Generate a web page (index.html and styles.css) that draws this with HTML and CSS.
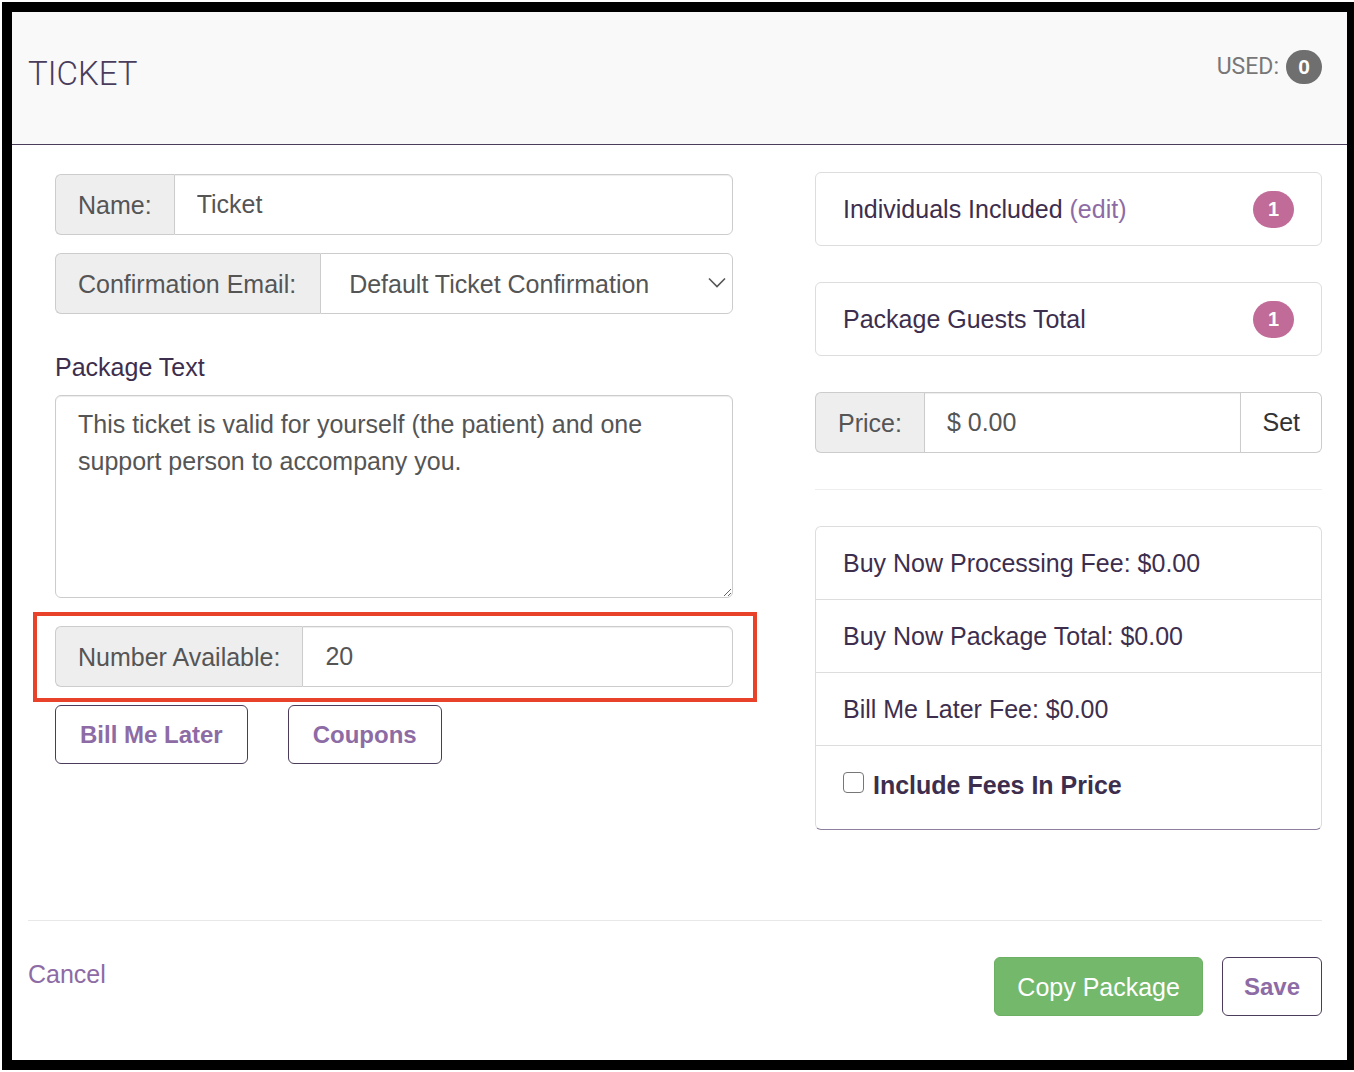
FILE: index.html
```html
<!DOCTYPE html>
<html lang="en">
<head>
<meta charset="utf-8">
<title>Ticket</title>
<link rel="stylesheet" href="styles.css">
</head>
<body>
<div class="frame">
  <div class="modal">
    <header class="modal-header">
      <h1 class="modal-title">TICKET</h1>
      <div class="used">USED: <span class="badge badge-gray">0</span></div>
    </header>

    <div class="modal-body">
      <div class="col col-left">
        <div class="input-group">
          <span class="addon">Name:</span>
          <input class="form-control" type="text" value="Ticket">
        </div>

        <div class="input-group gap-18">
          <span class="addon addon-wide">Confirmation Email:</span>
          <div class="select-wrap">
            <select class="form-control select">
              <option>Default Ticket Confirmation</option>
            </select>
            <svg class="chevron" width="18" height="11" viewBox="0 0 18 11" aria-hidden="true">
              <polyline points="1,1.5 9,9.5 17,1.5" fill="none" stroke="#555" stroke-width="1.6"/>
            </svg>
          </div>
        </div>

        <label class="field-label">Package Text</label>
        <textarea class="form-control textarea">This ticket is valid for yourself (the patient) and one support person to accompany you.</textarea>

        <div class="highlight">
          <div class="input-group">
            <span class="addon">Number Available:</span>
            <input class="form-control" type="text" value="20">
          </div>
        </div>

        <div class="btn-row">
          <button class="btn btn-outline btn-wide">Bill Me Later</button>
          <button class="btn btn-outline btn-wide">Coupons</button>
        </div>
      </div>

      <div class="col col-right">
        <div class="panel">
          <span>Individuals Included <a class="link">(edit)</a></span>
          <span class="badge badge-pink">1</span>
        </div>
        <div class="panel gap-36">
          <span>Package Guests Total</span>
          <span class="badge badge-pink">1</span>
        </div>

        <div class="input-group gap-36">
          <span class="addon">Price:</span>
          <input class="form-control square" type="text" value="$ 0.00">
          <button class="btn-set">Set</button>
        </div>

        <hr class="divider">

        <ul class="list-group">
          <li class="list-item">Buy Now Processing Fee: $0.00</li>
          <li class="list-item">Buy Now Package Total: $0.00</li>
          <li class="list-item">Bill Me Later Fee: $0.00</li>
          <li class="list-item list-item-check">
            <label class="check"><input type="checkbox"> Include Fees In Price</label>
          </li>
        </ul>
      </div>
    </div>

    <footer class="modal-footer">
      <a class="link cancel">Cancel</a>
      <div class="footer-actions">
        <button class="btn btn-success">Copy Package</button>
        <button class="btn btn-outline btn-save">Save</button>
      </div>
    </footer>
  </div>
</div>
</body>
</html>
```

FILE: styles.css
```css
* { box-sizing: border-box; }

html, body {
  margin: 0;
  padding: 0;
  background: #fff;
}

body {
  font-family: "Liberation Sans", Arial, sans-serif;
  font-size: 25px;
  line-height: 36px;
  color: #3d2e4e;
}

/* black frame around the dialog */
.frame {
  margin: 2px 0 0 2px;
  width: 1352px;
  height: 1068px;
  border: 10px solid #000;
  border-right-width: 7px;
}

.modal {
  height: 100%;
  display: flex;
  flex-direction: column;
  background: #fff;
}

/* header */
.modal-header {
  height: 133px;
  flex: none;
  display: flex;
  justify-content: space-between;
  align-items: flex-start;
  padding: 0 25px 0 16px;
  background: #f9f9f9;
  border-bottom: 1px solid #4b3c5c;
}

.modal-title {
  margin: 42px 0 0;
  font-family: Roboto, "Liberation Sans", sans-serif;
  font-weight: 300;
  font-size: 33px;
  line-height: 40px;
  color: #4a3d5c;
  letter-spacing: 0;
}

.used {
  margin-top: 37px;
  display: flex;
  align-items: center;
  gap: 7px;
  font-family: Roboto, "Liberation Sans", sans-serif;
  font-size: 23px;
  line-height: 36px;
  color: #777;
}

.badge {
  display: inline-flex;
  align-items: center;
  justify-content: center;
  color: #fff;
  font-weight: bold;
  font-family: "Liberation Sans", Arial, sans-serif;
}

.badge-gray {
  width: 36px;
  height: 34px;
  border-radius: 17px;
  background: #6f6f6f;
  font-size: 21px;
}

.badge-pink {
  width: 41px;
  height: 37px;
  border-radius: 19px;
  background: #c06b98;
  font-size: 20px;
}

/* body */
.modal-body {
  display: grid;
  grid-template-columns: 678px 507px;
  column-gap: 82px;
  padding: 27px 25px 0 43px;
}

.col { display: flex; flex-direction: column; }
.col-left { padding-top: 2px; }

.gap-18 { margin-top: 18px; }
.gap-36 { margin-top: 36px; }

.input-group {
  display: flex;
  height: 61px;
}

.addon {
  flex: none;
  display: flex;
  align-items: center;
  padding: 0 22px;
  background: #eee;
  border: 1px solid #ccc;
  border-right: 0;
  border-radius: 6px 0 0 6px;
  color: #555;
  white-space: nowrap;
}

.addon-wide { padding-right: 24px; }

.form-control {
  flex: 1;
  min-width: 0;
  height: 100%;
  margin: 0;
  padding: 0 22px;
  border: 1px solid #ccc;
  border-radius: 0 6px 6px 0;
  background: #fff;
  font-family: "Liberation Sans", Arial, sans-serif;
  font-size: 25px;
  color: #555;
  box-shadow: inset 0 1px 1px rgba(0, 0, 0, .075);
  outline: none;
}

.form-control.square { border-radius: 0; }

.select-wrap {
  position: relative;
  flex: 1;
  display: flex;
}

.select {
  appearance: none;
  -webkit-appearance: none;
  padding-left: 28px;
  box-shadow: none;
}

.chevron {
  position: absolute;
  right: 7px;
  top: 24px;
  pointer-events: none;
}

.field-label {
  margin: 35px 0 10px;
  line-height: 36px;
  color: #3d2e4e;
}

.textarea {
  flex: none;
  height: 203px;
  padding: 10px 22px;
  line-height: 37px;
  border-radius: 6px;
  resize: vertical;
}

/* annotation box drawn round the availability field */
.highlight {
  position: relative;
  margin-top: 28px;
}

.highlight::after {
  content: "";
  position: absolute;
  left: -22px;
  top: -14px;
  right: -24px;
  bottom: -15px;
  border: 4px solid #e8432a;
  pointer-events: none;
}

.btn-row {
  display: flex;
  gap: 40px;
  margin-top: 18px;
}

.btn {
  height: 59px;
  padding: 0 22px;
  border-radius: 6px;
  font-family: "Liberation Sans", Arial, sans-serif;
  font-size: 25px;
  line-height: 36px;
  cursor: pointer;
}

.btn-outline {
  background: #fff;
  border: 1px solid #4b3c5c;
  color: #8d6ba5;
  font-weight: bold;
  font-size: 24px;
}

.btn-wide { padding: 0 24px; }
.btn-save { padding: 0 21px; }

.btn-success {
  background: #74b86b;
  border: 1px solid #6cb163;
  color: #fff;
}

/* right column */
.panel {
  height: 74px;
  flex: none;
  display: flex;
  align-items: center;
  justify-content: space-between;
  padding: 0 27px;
  border: 1px solid #ddd;
  border-radius: 6px;
  color: #3d2e4e;
}

.link {
  color: #8d6ba5;
  text-decoration: none;
  cursor: pointer;
}

.btn-set {
  flex: none;
  height: 61px;
  padding: 0 21px;
  background: #fff;
  border: 1px solid #ccc;
  border-left: 0;
  border-radius: 0 6px 6px 0;
  font-family: "Liberation Sans", Arial, sans-serif;
  font-size: 25px;
  color: #333;
}

.divider {
  margin: 36px 0 0;
  border: 0;
  border-top: 1px solid #eee;
}

.list-group {
  list-style: none;
  margin: 36px 0 0;
  padding: 0;
  border: 1px solid #ddd;
  border-bottom-color: #8e7f9e;
  border-radius: 6px;
}

.list-item {
  padding: 18px 27px;
  line-height: 36px;
  border-top: 1px solid #ddd;
  color: #3d2e4e;
}

.list-item:first-child { border-top: 0; }

.list-item-check { padding: 21px 27px 26px; }

.check {
  display: flex;
  align-items: center;
  font-weight: bold;
  color: #3d2e4e;
}

.check input {
  appearance: none;
  -webkit-appearance: none;
  width: 21px;
  height: 21px;
  margin: -6px 9px 0 0;
  border: 1.5px solid #777;
  border-radius: 4px;
  background: #fff;
}

/* footer */
.modal-footer {
  margin: auto 25px 0 16px;
  height: 140px;
  display: flex;
  justify-content: space-between;
  align-items: flex-start;
  padding-top: 35px;
  border-top: 1px solid #e8e8e8;
}

.footer-actions {
  display: flex;
  gap: 19px;
  padding-top: 1px;
}
```
